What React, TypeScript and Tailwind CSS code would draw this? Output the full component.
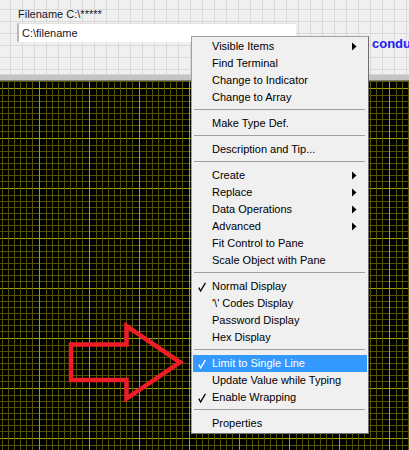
import React from "react";

type Item =
  | { sep: true }
  | { label: string; sub?: boolean; checked?: boolean; active?: boolean };

const menuItems: Item[] = [
  { label: "Visible Items", sub: true },
  { label: "Find Terminal" },
  { label: "Change to Indicator" },
  { label: "Change to Array" },
  { sep: true },
  { label: "Make Type Def." },
  { sep: true },
  { label: "Description and Tip..." },
  { sep: true },
  { label: "Create", sub: true },
  { label: "Replace", sub: true },
  { label: "Data Operations", sub: true },
  { label: "Advanced", sub: true },
  { label: "Fit Control to Pane" },
  { label: "Scale Object with Pane" },
  { sep: true },
  { label: "Normal Display", checked: true },
  { label: "'\\' Codes Display" },
  { label: "Password Display" },
  { label: "Hex Display" },
  { sep: true },
  { label: "Limit to Single Line", checked: true, active: true },
  { label: "Update Value while Typing" },
  { label: "Enable Wrapping", checked: true },
  { sep: true },
  { label: "Properties" },
];

const Check = () => (
  <svg className="absolute left-[5px] top-[4px] w-[8px] h-[10px]" viewBox="0 0 8 10">
    <path d="M0.8 5.6 L2.6 9 L7.4 0.8" fill="none" stroke="currentColor" strokeWidth="1.3" />
  </svg>
);

const SubArrow = () => (
  <svg className="absolute right-[10px] top-[4px] w-[5px] h-[9px]" viewBox="0 0 5 9">
    <polygon points="0,0.5 4.5,4.5 0,8.5" fill="currentColor" />
  </svg>
);

const ContextMenu = () => (
  <div className="absolute left-[191px] top-[36px] w-[178px] flex flex-col bg-[#f0f0f0] border border-[#a0a0a0] border-r-[#6e6e6e] border-b-[#6e6e6e] p-[1px]">
    {menuItems.map((it, i) =>
      "sep" in it ? (
        <div key={i} className="h-[9px] pt-[3px] pl-[1px] pr-[2px]">
          <div className="h-px bg-[#a0a0a0]" />
        </div>
      ) : (
        <div
          key={i}
          className={
            it.active
              ? "relative h-[17px] leading-[17px] pl-[19px] bg-[#3399ff] text-white"
              : "relative h-[17px] leading-[17px] pl-[19px] text-black"
          }>
          {it.checked && <Check />}
          {it.label}
          {it.sub && <SubArrow />}
        </div>
      ),
    )}
  </div>
);

export default function App() {
  return (
    <div className="relative w-[409px] h-[450px] flex flex-col overflow-hidden font-['Liberation_Sans',Arial,sans-serif] text-[11px]">
      {/* front panel, light grid */}
      <div className="h-[74px] flex flex-col items-start gap-[2px] bg-[#f0f0f0] [background-image:linear-gradient(to_right,#d9d9d9_1px,transparent_1px),linear-gradient(to_bottom,#d9d9d9_1px,transparent_1px)] [background-size:12px_12px] [background-position:10px_9px] pl-[18px] pt-[7px]">
        <div className="leading-[14px] text-[#16162a]">Filename C:\*****</div>
        <div className="-ml-px w-[279px] h-[19px] bg-white border-l-2 border-t border-l-[#b8b8b8] border-t-[#e2e2e2] pl-[3px] leading-[18px] text-[#16162a]">
          C:\filename
        </div>
      </div>

      {/* splitter bar */}
      <div className="h-[7px] bg-[#c4c4c4] border-t border-[#d6d6d6] border-b-[#7c7c7c] border-b" />

      {/* dark pane grid */}
      <div className="flex-1 bg-black [background-image:linear-gradient(to_right,#a4a400_0_1px,transparent_1px_7px,#555500_7px_8px,transparent_8px_13px,#555500_13px_14px,transparent_14px_19px,#555500_19px_20px,transparent_20px_25px,#555500_25px_26px,transparent_26px_31px,#555500_31px_32px,transparent_32px_37px,#555500_37px_38px,transparent_38px_43px,#555500_43px_44px,transparent_44px),linear-gradient(to_bottom,#a4a400_0_1px,transparent_1px_7px,#555500_7px_8px,transparent_8px_13px,#555500_13px_14px,transparent_14px_19px,#555500_19px_20px,transparent_20px_25px,#555500_25px_26px,transparent_26px_31px,#555500_31px_32px,transparent_32px_37px,#555500_37px_38px,transparent_38px_43px,#555500_43px_44px,transparent_44px)] [background-size:50px_50px] [background-position:39px_7px]" />

      <span className="absolute left-[372px] top-[36px] leading-[15px] text-[13px] font-bold text-[#1c1cf5] whitespace-nowrap">
        conductivity
      </span>

      <svg className="absolute left-0 top-0 w-[409px] h-[450px] pointer-events-none" viewBox="0 0 409 450">
        <polygon
          points="71,344.5 126.5,344.5 126.5,326 180,362.3 126.5,398.5 126.5,380 71,380"
          fill="none"
          stroke="#ee1c24"
          strokeWidth="4.5"
          strokeMiterlimit="10"
        />
      </svg>

      <ContextMenu />
    </div>
  );
}
